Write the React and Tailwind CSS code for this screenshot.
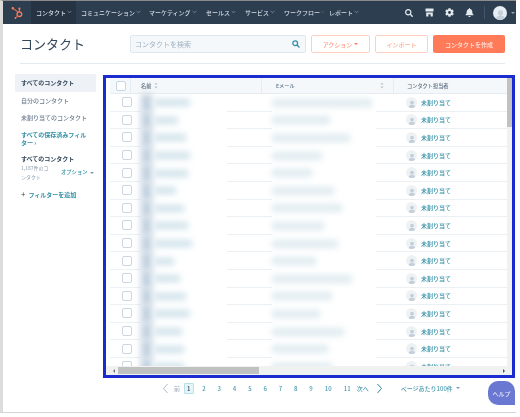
import { FaHubspot, FaCog, FaBell, FaSearch } from "react-icons/fa";

const font = { fontFamily: '"Noto Sans CJK JP","Noto Sans",sans-serif' };

function Caret({ className = "" }) {
  return <span className={`inline-block w-0 h-0 border-x-[2px] border-x-transparent border-t-[2.5px] ${className}`} />;
}
function Chevron() {
  return <svg width="5" height="4" viewBox="0 0 5 4" fill="none" stroke="#8fa3b5" strokeWidth="0.7"><path d="M0.7 1l1.8 1.8L4.3 1" /></svg>;
}
function NavItem({ label, active, w }) {
  return (
    <div className={`h-full flex items-center pl-[5px] pb-[1px] gap-[1px] whitespace-nowrap shrink-0 ${w} ${active ? "bg-[#253342]" : ""}`}>
      <span className="text-[6px] text-[#d5dee6] font-medium">{label}</span>
      <Chevron />
    </div>
  );
}
function Sort() {
  return (
    <svg width="4" height="7" viewBox="0 0 4 7" fill="#b8c5d2"><path d="M2 0.5L3.6 2.6H0.4zM2 6.5L0.4 4.4H3.6z" /></svg>
  );
}
function Person() {
  return (
    <div className="w-[11px] h-[11px] rounded-full bg-[#eef2f5] flex items-end justify-center overflow-hidden shrink-0">
      <svg width="8" height="9" viewBox="0 0 8 9" fill="#c3cfd9"><circle cx="4" cy="3.6" r="1.9" /><path d="M0.6 9c0-2.4 1.5-3.3 3.4-3.3S7.4 6.6 7.4 9z" /></svg>
    </div>
  );
}
const rows = [
  [36, 100], [24, 58], [32, 78], [36, 50], [34, 40], [22, 62], [30, 70], [34, 52],
  [38, 66], [20, 44], [26, 80], [32, 60], [36, 48], [28, 72], [30, 56],
];
function Row({ name, mail }) {
  return (
    <div className="flex h-[17.6px] shrink-0">
      <div className="w-[4px] shrink-0" />
      <div className="w-[31px] shrink-0 border-b border-[#eaf0f4] flex items-center justify-center pr-[2px] pl-[4px]">
        <div className="w-[10px] h-[10px] rounded-[2px] border border-[#cbd6e2] bg-white" />
      </div>
      <div className="w-[86px] shrink-0 bg-white flex items-center">
        <div className="w-[11px] h-[17.6px] bg-[#c3d2e0] blur-[3px] shrink-0" />
        <div className="ml-[2px] h-[7px] bg-[#cfe2ea] blur-[3px]" style={{ width: name }} />
      </div>
      <div className="w-[45px] shrink-0 border-b border-[#eaf0f4]" />
      <div className="w-[104px] shrink-0 bg-white flex items-center">
        <div className="h-[8px] bg-[#dfebf0] blur-[3px]" style={{ width: mail }} />
      </div>
      <div className="w-[29px] shrink-0 border-b border-[#eaf0f4]" />
      <div className="flex-1 border-b border-[#eaf0f4] flex items-center pl-[1px] gap-[4px]">
        <Person />
        <span className="text-[6px] font-medium text-[#2f8ea5] whitespace-nowrap">未割り当て</span>
      </div>
    </div>
  );
}
function Pg({ n, w = "w-[15.3px]", active }) {
  return (
    <div className={`${w} h-[13px] flex items-center justify-center text-[6px] font-medium shrink-0 ${active ? "" : "text-[#4a9bb0]"}`}>
      {active ? <span className="w-[10px] h-[11px] rounded-[1px] border border-[#b5e0ec] bg-[#e5f5f8] flex items-center justify-center text-[#33475b]">{n}</span> : n}
    </div>
  );
}

export default function App() {
  return (
    <div style={font} className="w-[520px] h-[417px] bg-white overflow-hidden relative blur-[0.3px]">
      <div className="w-[516px] h-[413px] border-t border-t-[#8c8c8c] border-l-[3px] border-l-[#dcdcdc] border-b border-b-[#d4d4d4] flex flex-col">
        {/* nav */}
        <div className="h-[23px] shrink-0 bg-[#2d3e50] flex items-center">
          <div className="w-[28px] flex justify-center">
            <FaHubspot size={12} color="#ff7a59" />
          </div>
          <NavItem label="コンタクト" active w="w-[45px]" />
          <NavItem label="コミュニケーション" w="w-[68px]" />
          <NavItem label="マーケティング" w="w-[57px]" />
          <NavItem label="セールス" w="w-[39px]" />
          <NavItem label="サービス" w="w-[39px]" />
          <NavItem label="ワークフロー" w="w-[45px]" />
          <NavItem label="レポート" w="w-[40px]" />
          <div className="ml-auto flex items-center">
            <FaSearch size={8} color="#e4ebf0" />
            <svg className="ml-[12px]" width="9" height="9" viewBox="0 0 9 9" fill="#e4ebf0"><path d="M0.5 0.5h8V3.6H0.5zM1.2 4.4h6.6V8.5H5.6V6.2H3.4V8.5H1.2z" /></svg>
            <FaCog className="ml-[11px]" size={9} color="#e4ebf0" />
            <FaBell className="ml-[11px]" size={9} color="#e4ebf0" />
            <div className="ml-[10px] w-px h-[13px] bg-[#43566a]" />
            <div className="ml-[8px] w-[14px] h-[14px] rounded-full bg-[#e8edf2] flex items-end justify-center overflow-hidden">
              <svg width="11" height="12" viewBox="0 0 8 9" fill="#c3cfd9"><circle cx="4" cy="3.6" r="1.9" /><path d="M0.6 9c0-2.4 1.5-3.3 3.4-3.3S7.4 6.6 7.4 9z" /></svg>
            </div>
            <Caret className="ml-[4px] mr-[1px] border-t-[#8fa3b5]" />
          </div>
        </div>

        {/* header */}
        <div className="ml-[17px] mr-[11px] h-[40px] shrink-0 border-b border-[#e3eaf0] flex items-start pt-[11px]">
          <div className="w-[110px] text-[13px] leading-[17px] text-[#33475b]">コンタクト</div>
          <div className="w-[176px] h-[18px] bg-[#f5f8fa] border border-[#dfe7ee] rounded-[2px] flex items-center px-[4px] shrink-0">
            <span className="text-[7px] text-[#9fb0c0]">コンタクトを検索</span>
            <svg className="ml-auto mr-[1px]" width="8" height="8" viewBox="0 0 9 9" fill="none" stroke="#2f8ea5" strokeWidth="1.4"><circle cx="3.6" cy="3.6" r="2.7" /><path d="M5.6 5.6L8.4 8.4" /></svg>
          </div>
          <div className="ml-[5px] w-[59px] h-[18px] border border-[#ffd0c2] rounded-[2px] flex items-center justify-center gap-[2px] text-[6px] text-[#ff9b80] font-medium">
            アクション<Caret className="border-t-[#ff7a59]" />
          </div>
          <div className="ml-[5px] w-[53px] h-[18px] border border-[#ffd0c2] rounded-[2px] flex items-center justify-center text-[6px] text-[#ffab94] font-medium">インポート</div>
          <div className="ml-[5px] w-[72px] h-[18px] bg-[#ff7a59] rounded-[2px] flex items-center justify-center text-[6px] text-[#ffe8e0] font-medium">コンタクトを作成</div>
        </div>

        {/* body */}
        <div className="flex items-start h-[303px] shrink-0 mt-[11px] ml-[12px]">
          <div className="w-[81px] shrink-0 text-[6px] font-medium -mt-[1px]">
            <div className="h-[18px] pb-[1px] bg-[#eef2f6] rounded-[1px] px-[6px] flex items-center font-bold text-[#33475b]">すべてのコンタクト</div>
            <div className="h-[17.5px] pb-[1px] px-[6px] flex items-center text-[#6b7d8f]">自分のコンタクト</div>
            <div className="h-[17.5px] pb-[2px] px-[6px] flex items-center text-[#6b7d8f] whitespace-nowrap">未割り当てのコンタクト</div>
            <div className="px-[6px] mt-[4px] leading-[8px] text-[#2f8ea5] font-bold">すべての保存済みフィルター ›</div>
            <div className="px-[6px] mt-[8px] leading-[8px] font-bold text-[#33475b]">すべてのコンタクト</div>
            <div className="pl-[6px] mt-[1px] flex items-center">
              <div className="w-[31px] shrink-0 text-[5px] leading-[8.5px] text-[#8a9aaa] font-normal">1,187件のコンタクト</div>
              <div className="ml-[9px] text-[5.3px] text-[#2f8ea5] whitespace-nowrap flex items-center gap-[2px]">オプション<Caret className="border-t-[#7c98b6]" /></div>
            </div>
            <div className="px-[6px] mt-[9px] h-[8px] text-[#2f8ea5] font-bold flex items-center gap-[3px]">
              <span className="text-[#33475b] text-[8px] leading-[8px] font-normal">+</span>フィルターを追加
            </div>
          </div>

          {/* table, annotated with the blue frame */}
          <div className="ml-[7px] w-[412px] h-[303px] shrink-0 border-[3px] border-[#1b2bd0] bg-white flex">
            <div className="w-[401px] shrink-0 flex flex-col overflow-hidden">
              <div className="flex-1 min-h-0 overflow-hidden flex flex-col">
                <div className="flex h-[16px] shrink-0 ml-[4px] bg-[#f5f8fa] border-b border-[#e6edf2] text-[5.2px] text-[#5c6f82] font-medium items-stretch">
                  <div className="w-[21px] shrink-0 border-r border-[#e6edf2] flex items-center justify-center pr-[2px] pl-[4px]">
                    <div className="w-[10px] h-[10px] rounded-[2px] border border-[#cbd6e2] bg-white" />
                  </div>
                  <div className="w-[131px] shrink-0 border-r border-[#e6edf2] flex items-center pl-[10px] gap-[3px]">名前<Sort /></div>
                  <div className="w-[132px] shrink-0 border-r border-[#e6edf2] flex items-center justify-between pl-[14px] pr-[9px]">Eメール<Sort /></div>
                  <div className="flex-1 flex items-center pl-[13px]">コンタクト担当者</div>
                </div>
                {rows.map((r, i) => <Row key={i} name={r[0]} mail={r[1]} />)}
                <Row name={30} mail={60} />
              </div>
              <div className="h-[9px] shrink-0 bg-[#f1f1f1] flex items-center">
                <span className="ml-[7px] w-0 h-0 border-y-[2px] border-y-transparent border-r-[2.5px] border-r-[#777]" />
                <div className="ml-[3px] w-[141px] h-[7px] bg-[#c1c1c1]" />
                <span className="ml-auto mr-[2px] w-0 h-0 border-y-[2px] border-y-transparent border-l-[2.5px] border-l-[#555]" />
              </div>
            </div>
            <div className="flex-1 bg-[#f1f1f1]">
              <div className="h-[49px] bg-[#c1c1c1]" />
            </div>
          </div>
        </div>

        {/* pagination */}
        <div className="flex items-center h-[14px] shrink-0 mt-[3px] ml-[159px]">
          <svg width="7" height="11" viewBox="0 0 7 11" fill="none" stroke="#a9bac9" strokeWidth="1"><path d="M5.5 1L1.5 5.5l4 4.5" /></svg>
          <span className="ml-[5px] text-[6px] text-[#a9b6c2] font-medium w-[7px]">前</span>
          <Pg n="1" active />
          <Pg n="2" /><Pg n="3" /><Pg n="4" /><Pg n="5" /><Pg n="6" /><Pg n="7" /><Pg n="8" /><Pg n="9" />
          <Pg n="10" w="w-[19px]" /><Pg n="11" w="w-[19px]" />
          <span className="ml-[0px] text-[6px] text-[#4a9bb0] font-medium whitespace-nowrap">次へ</span>
          <svg className="ml-[7px]" width="7" height="11" viewBox="0 0 7 11" fill="none" stroke="#2f8ea5" strokeWidth="1"><path d="M1.5 1l4 4.5-4 4.5" /></svg>
          <span className="ml-[18px] text-[6px] text-[#4a9bb0] font-medium whitespace-nowrap">ページあたり100件</span>
          <Caret className="ml-[3px] border-t-[#7c98b6]" />
        </div>
      </div>

      {/* help button */}
      <div className="absolute left-[488px] top-[381px] w-[27px] h-[24px] bg-[#6a78d1] rounded-l-[10px] rounded-tr-[10px] flex items-center justify-center text-[6px] text-[#e8eafa] font-medium">ヘルプ</div>
    </div>
  );
}
